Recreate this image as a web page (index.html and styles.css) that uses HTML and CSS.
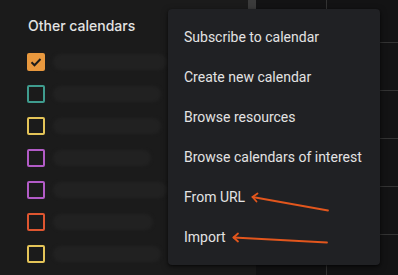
FILE: index.html
```html
<!DOCTYPE html>
<html lang="en">
<head>
  <meta charset="UTF-8">
  <meta name="viewport" content="width=device-width, initial-scale=1.0">
  <title>Other calendars menu</title>
  <link rel="stylesheet" href="styles.css">
</head>
<body>
  <div class="app">
    <aside class="sidebar">
      <h2 class="section-title">Other calendars</h2>
      <ul class="cal-list">
        <li class="cal-row"><span class="box box-orange checked">
          <svg viewBox="0 0 18 18" width="18" height="18"><path d="M4.5 9.2l3 3 6-6.2" fill="none" stroke="#1b1b1b" stroke-width="2"/></svg>
        </span><span class="label w-a"></span></li>
        <li class="cal-row"><span class="box box-teal"></span><span class="label w-b"></span></li>
        <li class="cal-row"><span class="box box-yellow"></span><span class="label w-c"></span></li>
        <li class="cal-row"><span class="box box-purple"></span><span class="label w-d"></span></li>
        <li class="cal-row"><span class="box box-purple"></span><span class="label w-a"></span></li>
        <li class="cal-row"><span class="box box-red"></span><span class="label w-e"></span></li>
        <li class="cal-row"><span class="box box-yellow"></span><span class="label w-c"></span></li>
      </ul>
      <div class="scroll-thumb"></div>
    </aside>

    <main class="week">
      <div class="day">
        <span class="day-name">FRI</span>
      </div>
      <div class="day day-grid">
        <div class="slot first"></div>
        <div class="slot"></div>
        <div class="slot"></div>
        <div class="slot"></div>
        <div class="slot"></div>
      </div>
    </main>
  </div>

  <!-- add-calendar menu, open over the sidebar -->
  <div class="menu">
    <div class="menu-item">Subscribe to calendar</div>
    <div class="menu-item">Create new calendar</div>
    <div class="menu-item">Browse resources</div>
    <div class="menu-item">Browse calendars of interest</div>
    <div class="menu-item">From URL</div>
    <div class="menu-item">Import</div>
  </div>

  <svg class="arrows" width="398" height="275" viewBox="0 0 398 275">
    <g fill="none" stroke="#e2561d" stroke-width="1.8" stroke-linecap="round" stroke-linejoin="round">
      <path d="M328 210.5L252.5 197"/>
      <path d="M257.5 193.5l-5 3.5 4 4.5"/>
      <path d="M327 242.5L233.5 237.5"/>
      <path d="M238 233.5l-4.5 4 4.5 4"/>
    </g>
  </svg>
</body>
</html>
```

FILE: styles.css
```css
body {
  margin: 0;
  font-family: Roboto, "Liberation Sans", Arial, sans-serif;
  background: #131314;
  color: #e3e3e3;
  overflow: hidden;
}

.app {
  display: flex;
  height: 275px;
}

.sidebar {
  width: 256px;
  flex-shrink: 0;
  background: #1b1b1b;
  position: relative;
}

.section-title {
  margin: 0;
  padding: 17px 0 0 28px;
  height: 46px;
  box-sizing: border-box;
  font-family: Inter, Roboto, sans-serif;
  font-size: 14px;
  font-weight: 500;
  line-height: 18px;
  color: #e3e3e3;
}

.cal-list {
  list-style: none;
  margin: 0;
  padding: 0;
}

.cal-row {
  display: flex;
  align-items: center;
  gap: 8px;
  height: 32px;
  padding-left: 27px;
}

.box {
  width: 18px;
  height: 18px;
  box-sizing: border-box;
  border: 2px solid;
  border-radius: 2px;
  flex-shrink: 0;
}

.box.checked {
  border: none;
}

.box svg {
  display: block;
}

.box-orange { border-color: #e8983e; background: #e8983e; }
.box-teal { border-color: #3f9c8e; }
.box-yellow { border-color: #e4c458; }
.box-purple { border-color: #b25bc6; }
.box-red { border-color: #df5630; }

.label {
  height: 16px;
  border-radius: 8px;
  background: #212121;
  filter: blur(1.5px);
}

.w-a { width: 114px; }
.w-b { width: 108px; }
.w-c { width: 108px; }
.w-d { width: 98px; }
.w-e { width: 100px; }

.scroll-thumb {
  position: absolute;
  top: 0;
  right: 0;
  width: 8px;
  height: 9px;
  background: #3b3b3b;
}

.week {
  flex: 1;
  display: flex;
}

.day {
  width: 70px;
  border-right: 1px solid #333;
  overflow: hidden;
}

.day-name {
  display: block;
  margin: -11px 0 0 29px;
  font-size: 11px;
  line-height: 12px;
  color: #a8c7fa;
}

.day-grid {
  flex: 1;
  border-right: none;
}

.slot {
  height: 47px;
  border-bottom: 1px solid #333;
}

.slot.first {
  height: 42px;
}

.menu {
  position: absolute;
  top: 9px;
  left: 168px;
  width: 212px;
  padding: 8px 0;
  background: #202124;
  border-radius: 4px;
  box-shadow: 0 2px 6px rgba(0, 0, 0, 0.5), 0 1px 2px rgba(0, 0, 0, 0.4);
}

.menu-item {
  height: 40px;
  line-height: 40px;
  padding-left: 16px;
  font-size: 14px;
  color: #e3e3e3;
  white-space: nowrap;
}

.arrows {
  position: absolute;
  top: 0;
  left: 0;
  pointer-events: none;
}
```
